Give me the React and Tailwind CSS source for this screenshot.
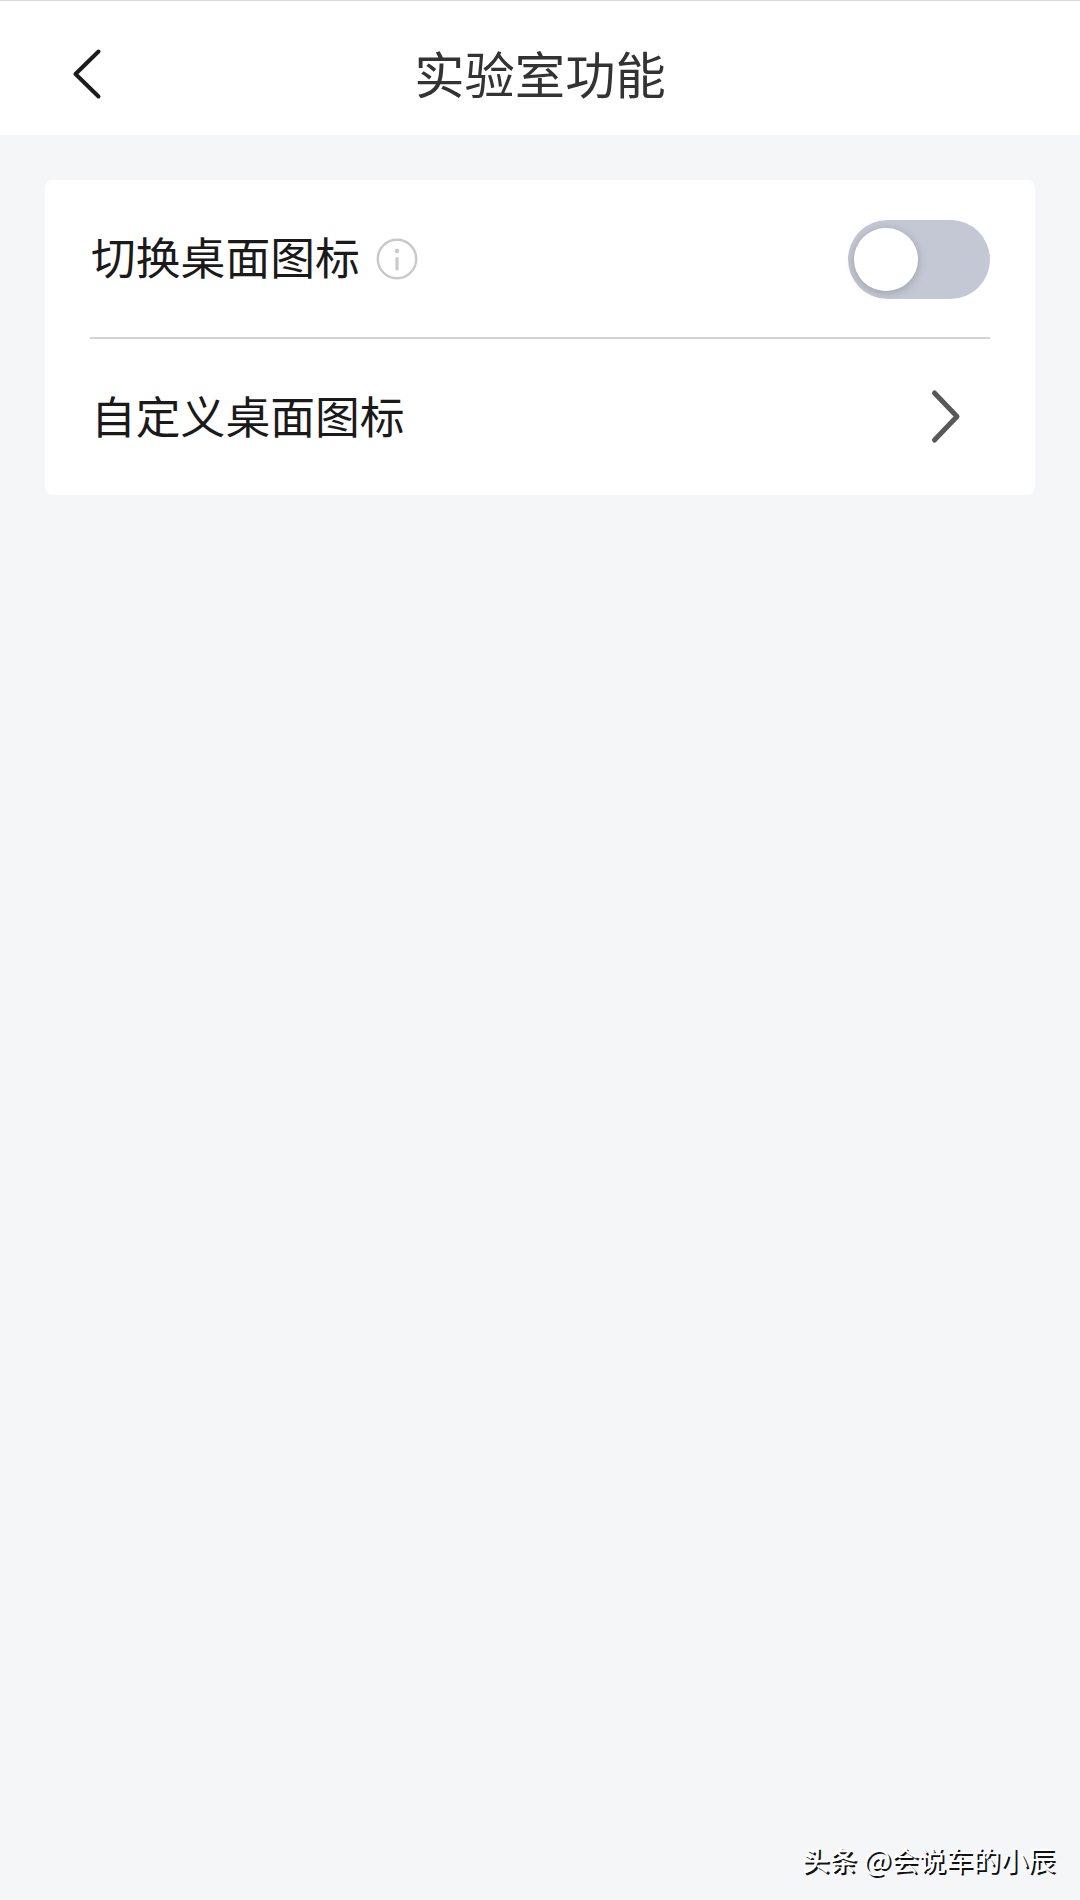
import React, { useState } from 'react';

const InfoIcon = () => (
    <svg width="42" height="42" viewBox="0 0 42 42" fill="none">
        <circle cx="21" cy="21" r="19.2" stroke="#c9c9c9" strokeWidth="2.4" />
        <circle cx="21" cy="13" r="2.2" fill="#c9c9c9" />
        <path d="M21 20.5V31" stroke="#c9c9c9" strokeWidth="3.2" strokeLinecap="round" />
    </svg>
);

const Header = () => (
    <header className="h-[135px] bg-white border-t border-[#d9d9d9] flex items-center px-[66px]">
        <button aria-label="返回" className="w-11 h-[60px] flex items-center mt-[11px]">
            <svg width="44" height="60" viewBox="0 0 44 60" fill="none">
                <path d="M32.5 7.5L9.5 30L32.5 52.5" stroke="#1c1c1c" strokeWidth="4" strokeLinecap="round" strokeLinejoin="round" />
            </svg>
        </button>
        <h1 className="flex-1 text-center text-[50.3px] leading-[60px] text-[#333333] mt-[7px]">实验室功能</h1>
        <div className="w-11" />
    </header>
);

const App = () => {
    const [enabled, setEnabled] = useState(false);

    return (
        <div className="h-[1900px] w-[1080px] bg-[#f4f6f8] flex flex-col font-['Noto_Sans_CJK_SC',sans-serif]">
            <Header />

            <main className="flex-1 px-[45px] pt-[45px]">
                <div className="h-[315px] bg-white rounded-lg px-[45px]">
                    {/* Switch icon */}
                    <div className="h-[159px] flex items-center border-b-2 border-[#d3d3d3]">
                        <span className="ml-px mb-[5px] text-[44.8px] leading-[60px] text-[#1a1a1a]">切换桌面图标</span>
                        <span className="ml-4"><InfoIcon /></span>
                        <button
                            role="switch"
                            aria-checked={enabled}
                            onClick={() => setEnabled(!enabled)}
                            className={`ml-auto mt-px w-[142px] h-[79px] rounded-full bg-[#c4c7d4] flex items-center px-1.5 ${enabled ? 'justify-end' : ''}`}
                        >
                            <span className="w-16 h-[63px] rounded-full bg-white shadow-[0_2px_8px_rgba(80,90,80,0.35)]" />
                        </button>
                    </div>

                    {/* Custom icon */}
                    <div className="h-[156px] flex items-center justify-between pr-[26px]">
                        <span className="ml-px mb-[5px] text-[44.8px] leading-[60px] text-[#1a1a1a]">自定义桌面图标</span>
                        <svg width="36" height="60" viewBox="0 0 36 60" fill="none">
                            <path d="M6.5 6L29 29.5L6.5 53" stroke="#585858" strokeWidth="5" strokeLinecap="round" strokeLinejoin="round" />
                        </svg>
                    </div>
                </div>
            </main>

            <footer className="flex items-baseline justify-end pr-[25px] pb-[21px] text-[27.3px] leading-10 text-white whitespace-pre [text-shadow:2px_2px_0_#111]">
                <span className="font-medium">头条</span>
                <span className="text-[29.5px]"> @</span>
                <span>会说车的小辰</span>
            </footer>
        </div>
    );
};

export default App;
